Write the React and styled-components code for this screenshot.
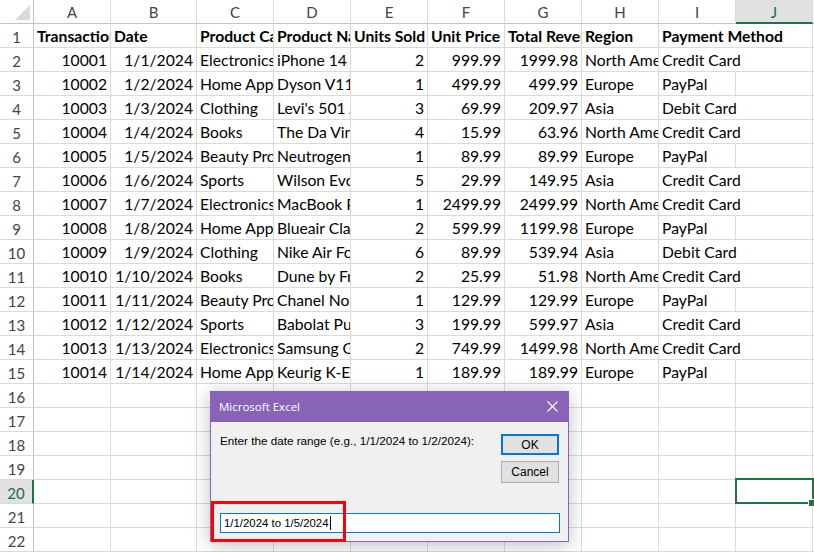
import React from "react";
import styled, { createGlobalStyle, css } from "styled-components";

const Global = createGlobalStyle`
  html, body { margin: 0; padding: 0; background: #fff; overflow: hidden; }
  * { box-sizing: border-box; }
`;

const GREEN = "#217346";
const GRID = "#dadada";
const HEAD_LINE = "#c4c4c4";

const Page = styled.div`
  position: relative;
  width: 814px;
  height: 552px;
  overflow: hidden;
  background: #fff;
`;

const Sheet = styled.div`
  display: grid;
  grid-template-columns: 34px 77px 86px repeat(8, 77px) 1fr;
  grid-auto-rows: 24px;
  font-family: Lato, "Liberation Sans", sans-serif;
  font-size: 15.7px;
  color: #000;
`;

const Corner = styled.div`
  position: relative;
  background: #fff;
  border-right: 1px solid ${HEAD_LINE};
  border-bottom: 1px solid ${HEAD_LINE};
  display: flex;
  align-items: flex-end;
  justify-content: flex-end;
  padding: 0 3px 3px 0;
`;

const ColHead = styled.div`
  display: flex;
  align-items: center;
  justify-content: center;
  padding-top: 1px;
  background: #fff;
  color: #444;
  font-size: 15px;
  border-right: 1px solid ${GRID};
  border-bottom: 1px solid ${HEAD_LINE};
  ${(p) =>
    p.$active &&
    css`
      background: #e1e1e1;
      color: #1e6b41;
      border-bottom: 2px solid ${GREEN};
    `}
`;

const RowHead = styled.div`
  display: flex;
  align-items: center;
  justify-content: center;
  padding-top: 2px;
  background: #fff;
  color: #444;
  font-size: 15px;
  border-right: 1px solid ${HEAD_LINE};
  border-bottom: 1px solid ${GRID};
  ${(p) =>
    p.$active &&
    css`
      background: #e1e1e1;
      color: #1e6b41;
      border-right: 2px solid ${GREEN};
    `}
`;

const Cell = styled.div`
  position: relative;
  border-right: 1px solid ${GRID};
  border-bottom: 1px solid ${GRID};
  padding: 1px 3px 0;
  line-height: 23px;
  white-space: nowrap;
  overflow: hidden;
  text-align: ${(p) => (p.$right ? "right" : "left")};
  font-weight: ${(p) => (p.$bold ? 700 : 400)};
  ${(p) =>
    p.$spill &&
    css`
      overflow: visible;
      border-right-color: transparent;
      z-index: 1;
    `}
  ${(p) =>
    p.$selected &&
    css`
      overflow: visible;
      z-index: 2;
      &::after {
        content: "";
        position: absolute;
        left: -1px;
        top: -2px;
        right: -2px;
        bottom: -1px;
        border: 2px solid ${GREEN};
      }
      &::before {
        content: "";
        position: absolute;
        right: -4px;
        bottom: -4px;
        width: 6px;
        height: 6px;
        background: ${GREEN};
        border: 1px solid #fff;
        z-index: 3;
      }
    `}
`;

const Dialog = styled.div`
  position: absolute;
  left: 210px;
  top: 391px;
  width: 359px;
  height: 151px;
  border: 1px solid #8764b8;
  border-top: none;
  background: #f0f0f0;
  box-shadow: 0 3px 18px rgba(0, 0, 0, 0.25);
  display: flex;
  flex-direction: column;
  z-index: 10;
`;

const TitleBar = styled.div`
  height: 31px;
  background: #8764b8;
  display: flex;
  align-items: center;
  justify-content: space-between;
  padding: 0 10px 0 8px;
  color: #fff;
  font-family: "Open Sans", "Liberation Sans", sans-serif;
  font-size: 11.5px;
`;

const Body = styled.div`
  flex: 1;
  display: flex;
  flex-direction: column;
  padding: 12px 9px 8px 9px;
  font-family: "Liberation Sans", Arial, sans-serif;
  font-size: 11.7px;
  color: #000;
`;

const TopRow = styled.div`
  display: flex;
  justify-content: space-between;
  align-items: flex-start;
`;

const Prompt = styled.div`
  line-height: 13px;
`;

const Buttons = styled.div`
  display: flex;
  flex-direction: column;
  gap: 6px;
`;

const Button = styled.div`
  width: 58px;
  height: ${(p) => (p.$default ? "21px" : "22px")};
  background: #e1e1e1;
  border: ${(p) => (p.$default ? "2px solid #0078d7" : "1px solid #adadad")};
  display: flex;
  align-items: center;
  justify-content: center;
  font-size: 12px;
`;

const Input = styled.div`
  margin-top: auto;
  margin-right: -1px;
  height: 20px;
  background: #fff;
  border: 1px solid #0078d7;
  display: flex;
  align-items: center;
  padding-left: 3px;
  font-size: 11.4px;
`;

const Caret = styled.span`
  display: inline-block;
  width: 1px;
  height: 14px;
  background: #000;
  margin-left: 1px;
`;

const Highlight = styled.div`
  position: absolute;
  left: 211px;
  top: 501px;
  width: 135px;
  height: 41px;
  border: 3.5px solid #ff0000;
  z-index: 11;
`;

const cols = ["A", "B", "C", "D", "E", "F", "G", "H", "I", "J"];

const header = [
  "Transaction ID",
  "Date",
  "Product Category",
  "Product Name",
  "Units Sold",
  "Unit Price",
  "Total Revenue",
  "Region",
  "Payment Method",
];

const rows = [
  [10001, "1/1/2024", "Electronics", "iPhone 14 Pro", 2, "999.99", "1999.98", "North America", "Credit Card"],
  [10002, "1/2/2024", "Home Appliances", "Dyson V11 Vacuum", 1, "499.99", "499.99", "Europe", "PayPal"],
  [10003, "1/3/2024", "Clothing", "Levi's 501 Jeans", 3, "69.99", "209.97", "Asia", "Debit Card"],
  [10004, "1/4/2024", "Books", "The Da Vinci Code", 4, "15.99", "63.96", "North America", "Credit Card"],
  [10005, "1/5/2024", "Beauty Products", "Neutrogena Skincare Set", 1, "89.99", "89.99", "Europe", "PayPal"],
  [10006, "1/6/2024", "Sports", "Wilson Evolution Basketball", 5, "29.99", "149.95", "Asia", "Credit Card"],
  [10007, "1/7/2024", "Electronics", "MacBook  Pro 16-inch", 1, "2499.99", "2499.99", "North America", "Credit Card"],
  [10008, "1/8/2024", "Home Appliances", "Blueair Classic 480i", 2, "599.99", "1199.98", "Europe", "PayPal"],
  [10009, "1/9/2024", "Clothing", "Nike Air Force 1", 6, "89.99", "539.94", "Asia", "Debit Card"],
  [10010, "1/10/2024", "Books", "Dune by Frank Herbert", 2, "25.99", "51.98", "North America", "Credit Card"],
  [10011, "1/11/2024", "Beauty Products", "Chanel No. 5 Perfume", 1, "129.99", "129.99", "Europe", "PayPal"],
  [10012, "1/12/2024", "Sports", "Babolat Pure Drive Tennis Racket", 3, "199.99", "599.97", "Asia", "Credit Card"],
  [10013, "1/13/2024", "Electronics", "Samsung Galaxy Tab S8", 2, "749.99", "1499.98", "North America", "Credit Card"],
  [10014, "1/14/2024", "Home Appliances", "Keurig K-Elite Coffee Maker", 1, "189.99", "189.99", "Europe", "PayPal"],
];

const rightCols = new Set([0, 1, 4, 5, 6]);
const SEL_ROW = 20;
const SEL_COL = 9;

function renderRow(r, values, bold) {
  const cells = [];
  for (let c = 0; c < 10; c++) {
    const v = values ? values[c] : undefined;
    const text = v === undefined ? "" : String(v);
    const spill = c === 8 && text.length > 6;
    cells.push(
      <Cell
        key={c}
        $right={!bold && rightCols.has(c)}
        $bold={bold}
        $spill={spill}
        $selected={r === SEL_ROW && c === SEL_COL}
      >
        {text}
      </Cell>
    );
  }
  cells.push(<Cell key="k" />);
  return (
    <React.Fragment key={r}>
      <RowHead $active={r === SEL_ROW}>{r}</RowHead>
      {cells}
    </React.Fragment>
  );
}

export default function App() {
  const all = [];
  all.push(renderRow(1, header, true));
  rows.forEach((row, i) => all.push(renderRow(i + 2, row, false)));
  for (let r = 16; r <= 22; r++) all.push(renderRow(r, null, false));

  return (
    <Page>
      <Global />
      <Sheet>
        <Corner>
          <svg width="15" height="15" viewBox="0 0 15 15">
            <polygon points="15,0 15,15 0,15" fill="#d9d9d9" />
          </svg>
        </Corner>
        {cols.map((c, i) => (
          <ColHead key={c} $active={i === SEL_COL}>
            {c}
          </ColHead>
        ))}
        <ColHead />
        {all}
      </Sheet>

      <Dialog>
        <TitleBar>
          <span>Microsoft Excel</span>
          <svg width="11" height="11" viewBox="0 0 11 11">
            <path d="M0.5 0.5 L10.5 10.5 M10.5 0.5 L0.5 10.5" stroke="#fff" strokeWidth="1.1" />
          </svg>
        </TitleBar>
        <Body>
          <TopRow>
            <Prompt>Enter the date range (e.g., 1/1/2024 to 1/2/2024):</Prompt>
            <Buttons>
              <Button $default>OK</Button>
              <Button>Cancel</Button>
            </Buttons>
          </TopRow>
          <Input>
            1/1/2024 to 1/5/2024
            <Caret />
          </Input>
        </Body>
      </Dialog>
      <Highlight />
    </Page>
  );
}
